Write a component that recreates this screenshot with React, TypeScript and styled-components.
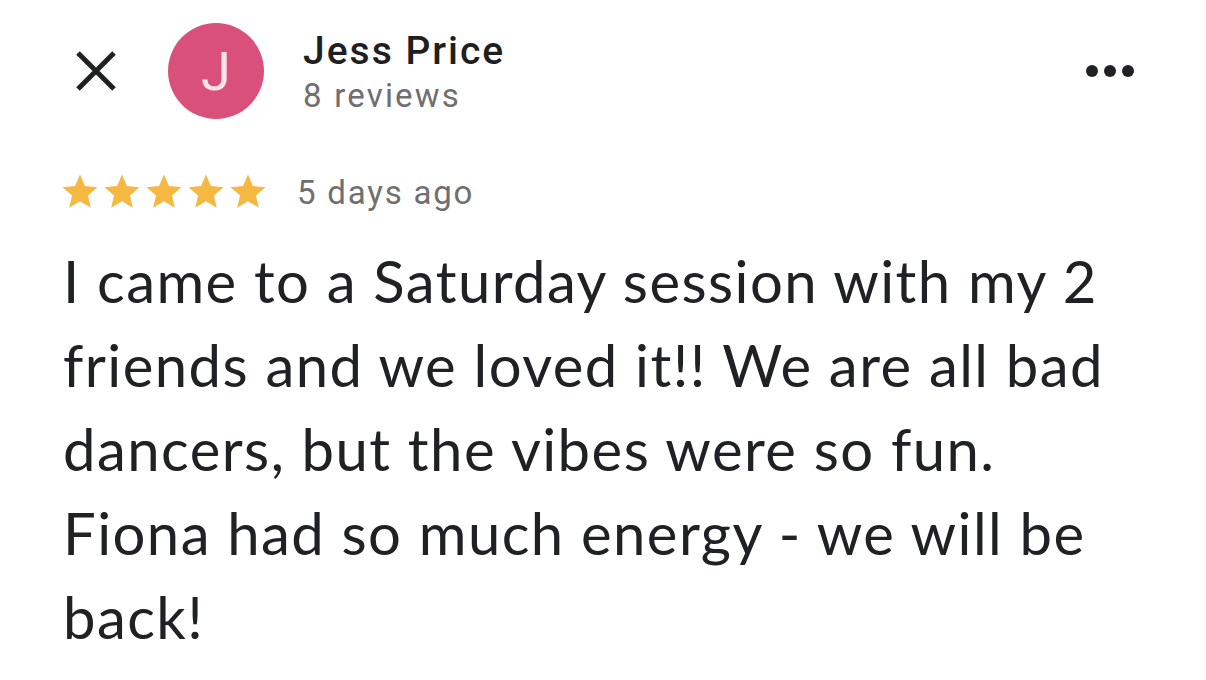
import React from "react";
import styled, { createGlobalStyle } from "styled-components";

const Global = createGlobalStyle`
  html, body { margin: 0; padding: 0; background: #ffffff; }
  body { width: 1206px; height: 680px; overflow: hidden; }
`;

const Card = styled.div`
  box-sizing: border-box;
  width: 1206px;
  height: 680px;
  padding: 23px 72px 0 63px;
  display: flex;
  flex-direction: column;
  font-family: Roboto, "Liberation Sans", sans-serif;
  color: #202124;
`;

const Header = styled.div`
  display: flex;
  align-items: center;
  height: 96px;
`;

const IconButton = styled.button`
  border: 0;
  background: none;
  padding: 0;
  display: flex;
  align-items: center;
  justify-content: center;
  width: 66px;
  height: 96px;
  margin-right: 39px;
  color: #202124;
`;

const Avatar = styled.div`
  width: 96px;
  height: 96px;
  border-radius: 50%;
  background: #d9507b;
  color: #fbe3ea;
  display: flex;
  align-items: center;
  justify-content: center;
  font-size: 54px;
  font-weight: 400;
  margin-right: 39px;
  flex-shrink: 0;
`;

const NameBlock = styled.div`
  display: flex;
  flex-direction: column;
  padding-top: 3px;
`;

const Name = styled.div`
  font-size: 39px;
  font-weight: 500;
  line-height: 44px;
  letter-spacing: 2px;
  color: #1f1f1f;
`;

const Sub = styled.div`
  margin-top: 3px;
  font-size: 33px;
  line-height: 40px;
  color: #6f6f6f;
  letter-spacing: 2.2px;
`;

const MoreButton = styled.button`
  margin-left: auto;
  border: 0;
  background: none;
  padding: 0;
  display: flex;
  gap: 6px;
  align-items: center;
`;

const Dot = styled.span`
  width: 12px;
  height: 12px;
  border-radius: 50%;
  background: #202124;
`;

const RatingRow = styled.div`
  display: flex;
  align-items: center;
  margin-top: 52px;
  margin-left: -4px;
`;

const Stars = styled.div`
  display: flex;
  margin-right: 28px;
`;

const Age = styled.div`
  font-size: 33px;
  color: #6f6f6f;
  letter-spacing: 1.8px;
`;

const Body = styled.p`
  margin: 26px 0 0 0;
  font-family: Lato, "Open Sans", sans-serif;
  font-size: 58px;
  line-height: 84px;
  letter-spacing: 1.45px;
  color: #202124;
  white-space: nowrap;
`;

const Star = () => (
  <svg width="42" height="42" viewBox="0 0 24 24">
    <path
      fill="#f5b842"
      d="M12 17.27L18.18 21l-1.64-7.03L22 9.24l-7.19-.61L12 2 9.19 8.63 2 9.24l5.46 4.73L5.82 21z"
    />
  </svg>
);

const lines = [
  "I came to a Saturday session with my 2",
  "friends and we loved it!! We are all bad",
  "dancers, but the vibes were so fun.",
  "Fiona had so much energy - we will be",
  "back!",
];

export default function App() {
  return (
    <>
      <Global />
      <Card>
        <Header>
          <IconButton aria-label="Close">
            <svg width="40" height="40" viewBox="0 0 40 40">
              <path d="M2 2L38 38M38 2L2 38" stroke="#202124" strokeWidth="5" />
            </svg>
          </IconButton>
          <Avatar>J</Avatar>
          <NameBlock>
            <Name>Jess Price</Name>
            <Sub>8 reviews</Sub>
          </NameBlock>
          <MoreButton aria-label="More">
            <Dot />
            <Dot />
            <Dot />
          </MoreButton>
        </Header>
        <RatingRow>
          <Stars>
            {[0, 1, 2, 3, 4].map((i) => (
              <Star key={i} />
            ))}
          </Stars>
          <Age>5 days ago</Age>
        </RatingRow>
        <Body>
          {lines.map((l, i) => (
            <React.Fragment key={i}>
              {l}
              {i < lines.length - 1 && <br />}
            </React.Fragment>
          ))}
        </Body>
      </Card>
    </>
  );
}
